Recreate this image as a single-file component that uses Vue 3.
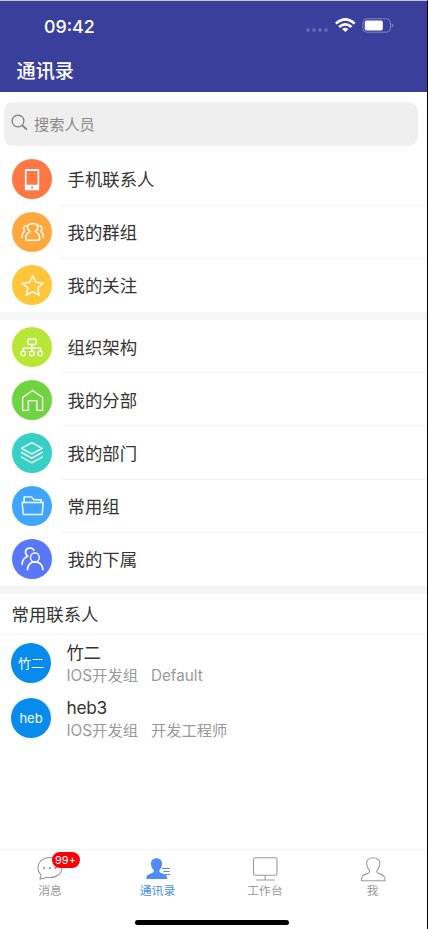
<script setup>
const groups = [
  [
    { icon: 'phone', label: '手机联系人', color: '#ff7744' },
    { icon: 'group', label: '我的群组', color: '#ffa83e' },
    { icon: 'star', label: '我的关注', color: '#ffc53b' },
  ],
  [
    { icon: 'org', label: '组织架构', color: '#b9e636' },
    { icon: 'house', label: '我的分部', color: '#6fd43f' },
    { icon: 'layers', label: '我的部门', color: '#36d0c6' },
    { icon: 'folder', label: '常用组', color: '#40a5ff' },
    { icon: 'people', label: '我的下属', color: '#5877fa' },
  ],
]
const contacts = [
  { avatar: '竹二', name: '竹二', dept: 'IOS开发组', title: 'Default' },
  { avatar: 'heb', name: 'heb3', dept: 'IOS开发组', title: '开发工程师' },
]
const tabs = [
  { icon: 'chat', label: '消息', badge: '99+' },
  { icon: 'book', label: '通讯录', active: true },
  { icon: 'desk', label: '工作台' },
  { icon: 'me', label: '我' },
]
</script>

<template>
  <div class="screen">
    <header class="header">
      <div class="status">
        <span class="time">09:42</span>
        <svg class="signals" width="90" height="20" viewBox="0 0 90 20">
          <g fill="#6669b8">
            <circle cx="4" cy="15" r="1.900" /><circle cx="10" cy="15" r="1.900" />
            <circle cx="16" cy="15" r="1.900" /><circle cx="22" cy="15" r="1.900" />
          </g>
          <g fill="none" stroke="#fff" stroke-width="2.600">
            <path d="M31.900 8.600Q41.300.2 50.700 8.600" />
            <path d="M35.100 12Q41.300 6.600 47.500 12" />
          </g>
          <path d="M38.200 13.900q3.100-2.400 6.200 0L41.300 17z" fill="#fff" />
          <rect x="58.900" y="3.800" width="27.600" height="13.400" rx="4" fill="none" stroke="#8083c8" />
          <rect x="60.800" y="5.500" width="18" height="10" rx="2" fill="#fff" />
          <path d="M87.800 8.500q3 2 0 4.300z" fill="#8083c8" />
        </svg>
      </div>
      <h1 class="title">通讯录</h1>
    </header>

    <div class="search">
      <svg width="18" height="18" viewBox="0 0 18 18" fill="none" stroke="#777" stroke-width="1.200">
        <circle cx="7" cy="7" r="5.900" /><path d="M11.300 11.300l4.600 4.300" stroke-width="1.700" />
      </svg>
      <span>搜索人员</span>
    </div>

    <section v-for="(group, g) in groups" :key="g" class="group">
      <div v-for="item in group" :key="item.icon" class="row">
        <div class="disc" :style="{ background: item.color }">
          <svg width="40" height="40" viewBox="0 0 40 40" fill="none" stroke="#fff" stroke-width="1.400" stroke-linejoin="round" stroke-linecap="round">
            <template v-if="item.icon === 'phone'">
              <path fill="#fff" stroke="none" fill-rule="evenodd" d="M13.900 10h12.300a1 1 0 0 1 1 1v19.300a1 1 0 0 1-1 1H13.900a1 1 0 0 1-1-1V11a1 1 0 0 1 1-1zM14.500 11.900v13.800h11.100V11.900zM20.100 27.300a1.100 1.100 0 1 0 .01 0z" />
            </template>
            <template v-else-if="item.icon === 'group'">
              <path d="M18.300 19.600c-1.900-1-2.800-2.700-2.800-4.300 0-2.300 2-3.700 5.200-3.700s5.200 1.400 5.200 3.700c0 1.600-.9 3.300-2.800 4.300 3 .8 4.600 3.500 4.600 7.200 0 1-.4 1.500-1.400 1.500H15.100c-1 0-1.400-.5-1.400-1.500 0-3.700 1.600-6.400 4.600-7.200z" />
              <path d="M14.900 13.700c-3-.5-4.300 2.800-2.400 5.400-1.700 1.300-2.500 3.600-2.500 6.500M26.500 13.700c3-.5 4.300 2.800 2.400 5.400 1.700 1.300 2.500 3.600 2.500 6.500" />
            </template>
            <path v-else-if="item.icon === 'star'" d="M20.800 10.700l3 6.600 7.300.8-5.400 4.900 1.500 7.200-6.400-3.600-6.400 3.600 1.500-7.200-5.400-4.900 7.300-.8z" />
            <template v-else-if="item.icon === 'org'">
              <rect x="15.800" y="12" width="8.300" height="5.500" rx="1.200" />
              <path d="M20 17.500v6.500M11.200 24v-2.700h17.400V24" />
              <rect x="9.100" y="24.400" width="4.200" height="4.200" rx="1" />
              <rect x="17.800" y="24.400" width="4.200" height="4.200" rx="1" />
              <rect x="26" y="24.400" width="4.200" height="4.200" rx="1" />
            </template>
            <path v-else-if="item.icon === 'house'" d="M10.600 30.400V17.500L20.600 10.500l10 7v12.900H24.800V20.600h-8.400v9.800z" />
            <template v-else-if="item.icon === 'layers'">
              <path d="M9.400 15.300L19.800 9.700l10.400 5.600-10.400 5.500z" />
              <path d="M9.400 19.300l10.400 5.900 10.400-5.900M9.400 24l10.400 5.900 10.400-5.900" />
            </template>
            <path v-else-if="item.icon === 'folder'" d="M12.100 16.400v-5.500h7.300l2.500 2.800h7.300v2.700M10.200 16.500h21l-1 12H11.300z" />
            <template v-else>
              <circle cx="22.900" cy="18.400" r="4.400" />
              <path d="M15.500 30.600c.4-5 3.200-7.800 7.400-7.800s7.500 2.800 8 7.800M21.800 11.300c-1.200-3.200-7.800-3.300-8.300 1.400-.2 2 .7 3.400 2.300 4.300M15.400 17.500c-3.300 1-5.100 3.600-5.300 7.900" stroke-width="1.700" />
            </template>
          </svg>
        </div>
        <div class="label">{{ item.label }}</div>
      </div>
    </section>

    <h2 class="heading">常用联系人</h2>
    <ul class="contacts">
      <li v-for="c in contacts" :key="c.name" class="contact">
        <div class="disc avatar">{{ c.avatar }}</div>
        <div class="info">
          <div class="name">{{ c.name }}</div>
          <div class="meta"><span>{{ c.dept }}</span><span class="role">{{ c.title }}</span></div>
        </div>
      </li>
    </ul>

    <footer class="footer">
      <nav class="tabs">
        <div v-for="t in tabs" :key="t.icon" class="tab" :class="{ active: t.active }">
          <div class="tab-icon">
            <svg width="28" height="28" viewBox="0 0 28 28" fill="none" stroke="#999" stroke-width="1.100" stroke-linejoin="round">
              <template v-if="t.icon === 'chat'">
                <path d="M3.800 24.800c1-1.300 1.400-2.700 1-4.200C2.900 18.800 2 16.500 2 13.900 2 7.900 7.200 3.500 13.900 3.500s11.900 4.400 11.900 10.400-5.200 9.700-11.900 9.700c-1.300 0-2.500-.1-3.600-.4-1.900 1.200-4.100 1.800-6.500 1.600z" />
                <g fill="#888" stroke="none"><circle cx="8.300" cy="14" r="1.100" /><circle cx="13.900" cy="14" r="1.100" /><circle cx="19.500" cy="14" r="1.100" /></g>
              </template>
              <template v-else-if="t.icon === 'book'">
                <path fill="#4f8cf5" stroke="none" d="M12.500 4.200c3.500 0 5.600 2.300 5.600 5.500 0 2.600-1 5-2.700 6.200v2.200c1.200 1.500 7.800 1.700 8 6.200 0 .5-.4.800-.8.800H3c-.5 0-.8-.3-.8-.8.200-4.500 6.400-4.700 7.500-6.200v-2.200C8 14.700 7 12.300 7 9.700c0-3.200 2-5.500 5.500-5.500z" />
                <path stroke="#4f8cf5" d="M17.800 14.500h8.300M19.500 17.500h6.200M20.500 20.500h5.800" />
              </template>
              <template v-else-if="t.icon === 'desk'">
                <rect x="2.500" y="3.700" width="23.500" height="17.600" rx="1.800" /><path d="M14.200 21.300v4.700M5 26h18.700" />
              </template>
              <path v-else d="M14.200 3.700c4 0 7 2.300 6.600 6-.3 3-1 4.700-2.700 6.400-1 1.600 0 2.900 2.300 3.500 3.500 1 5.500 2.200 5.700 7.100H2.300c.2-4.900 2.200-6.100 5.700-7.100 2.300-.6 3.300-1.900 2.300-3.500C8.600 14.400 7.900 12.700 7.600 9.700c-.4-3.700 2.600-6 6.600-6z" />
            </svg>
            <span v-if="t.badge" class="badge">{{ t.badge }}</span>
          </div>
          <span class="tab-label">{{ t.label }}</span>
        </div>
      </nav>
      <div class="home"></div>
    </footer>
  </div>
</template>

<style>
body { margin: 0; background: #fff; }
</style>

<style scoped>
.screen {
  box-sizing: border-box;
  width: 428px;
  height: 929px;
  display: flex;
  flex-direction: column;
  overflow: hidden;
  background: #fff;
  border-top: 1px solid #c6c6cc;
  border-right: 1px solid #000;
  color: #333;
  font-family: Inter, "Noto Sans CJK SC", sans-serif;
}
.header { flex: none; height: 91px; background: #3b3f9c; color: #fff; }
.status { display: flex; justify-content: space-between; align-items: center; height: 51px; padding: 0 33px 0 44px; }
.time { font-size: 17.800px; font-weight: 500; line-height: 24px; }
.signals { margin-top: -3px; }
.title { margin: 0; padding: 4px 0 0 16.500px; font-size: 19.200px; line-height: 30px; font-weight: 500; }
.search {
  flex: none;
  display: flex;
  align-items: center;
  gap: 5px;
  height: 44px;
  margin: 10px 9px 6.400px 4px;
  padding: 0 0 2px 7px;
  box-sizing: border-box;
  border-radius: 9px;
  background: #efefef;
  color: #888;
  font-size: 15.200px;
}
.group { flex: none; border-bottom: 8px solid #f5f5f5; }
.row { display: flex; align-items: center; height: 53.200px; padding-left: 12px; }
.disc { flex: none; width: 40px; height: 40px; border-radius: 50%; }
.disc svg { display: block; }
.label {
  flex: 1;
  display: flex;
  align-items: center;
  box-sizing: border-box;
  height: 100%;
  margin-left: 8px;
  padding-left: 7.500px;
  border-bottom: 1px solid #f3f3f3;
  font-size: 17.400px;
}
.row:last-child .label { border-bottom-color: transparent; }
.heading { flex: none; box-sizing: border-box; margin: 0; height: 41px; padding: 1px 0 0 11.500px; border-bottom: 1px solid #f5f5f5; font-size: 17.400px; line-height: 40px; font-weight: 400; }
.contacts { flex: 1; margin: 0; padding: 0; list-style: none; }
.contact { display: flex; align-items: center; gap: 15.500px; height: 55.500px; padding-left: 11px; }
.avatar { display: flex; align-items: center; justify-content: center; background: #078cee; color: #fff; font-size: 13px; }
.info { padding-top: 2px; }
.name { font-size: 17.300px; line-height: 24px; letter-spacing: -0.300px; }
.meta { display: flex; gap: 13px; color: #999; font-size: 15.300px; line-height: 22px; }
.role { letter-spacing: -0.050px; }
.footer { flex: none; height: 80px; box-sizing: border-box; border-top: 1px solid #f3f3f3; }
.tabs { display: grid; grid-template-columns: 100px 115px 100px 115px; height: 70px; }
.tab { display: flex; flex-direction: column; align-items: center; padding-top: 4px; color: #999; }
.tab-icon { position: relative; height: 28px; }
.tab-icon svg { display: block; }
.tab-label { padding-top: 1px; font-size: 11.800px; line-height: 17px; }
.active { color: #3f8df5; }
.badge {
  position: absolute;
  left: 15.500px;
  top: -2px;
  width: 28px;
  height: 16px;
  border-radius: 8px;
  background: #fb0007;
  color: #fff;
  font-size: 11px;
  line-height: 16px;
  text-align: center;
}
.home { width: 154px; height: 5px; margin: 0 auto 0 134.500px; border-radius: 3px; background: #000; }
</style>
